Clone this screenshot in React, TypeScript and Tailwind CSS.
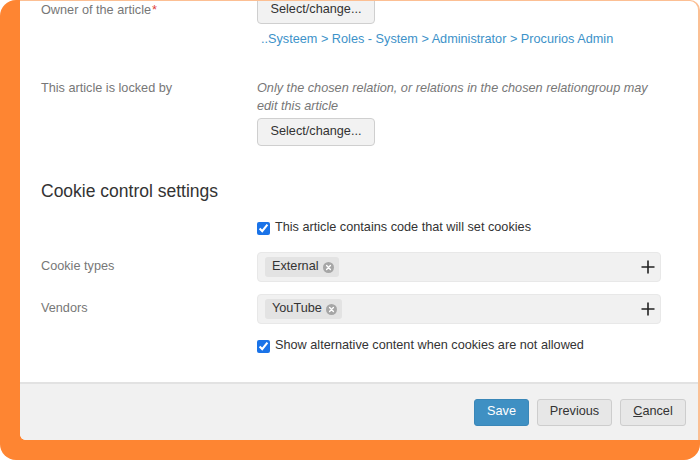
import React from "react";

const font = { fontFamily: '"Liberation Sans", Arial, Helvetica, sans-serif' };

const SelectButton = () => (
  <button
    type="button"
    className="h-[28px] w-[118px] rounded-[4px] border border-[#cfcfcf] bg-[#f2f2f2] text-[12.7px] text-[#333]"
  >
    Select/change...
  </button>
);

const RemoveIcon = () => (
  <svg width="11" height="11" viewBox="0 0 11 11" className="ml-[4px]">
    <circle cx="5.5" cy="5.5" r="5.5" fill="#a6a6a6" />
    <path d="M3.6 3.6 L7.4 7.4 M7.4 3.6 L3.6 7.4" stroke="#fff" strokeWidth="1.4" strokeLinecap="round" />
  </svg>
);

const PlusIcon = () => (
  <svg width="14" height="14" viewBox="0 0 14 14">
    <path d="M7 0.5 V13.5 M0.5 7 H13.5" stroke="#222" strokeWidth="1.6" />
  </svg>
);

const TagInput = ({ tag }: { tag: string }) => (
  <div className="flex h-[30px] w-[404px] items-center rounded-[4px] border border-[#e8e8e8] bg-[#f1f1f1] pl-[7px] pr-[5px]">
    <span className="flex h-[20px] items-center rounded-[3px] bg-[#e3e3e3] pl-[7px] pr-[5px] text-[12.7px] text-[#333]">
      {tag}
      <RemoveIcon />
    </span>
    <span className="ml-auto flex items-center">
      <PlusIcon />
    </span>
  </div>
);

const Checkbox = ({ label }: { label: string }) => (
  <label className="flex h-[18px] items-center text-[12.7px] text-[#333]">
    <input type="checkbox" defaultChecked className="m-0 h-[13px] w-[13px] accent-[#1a73e8]" />
    <span className="ml-[5px]">{label}</span>
  </label>
);

export default function App() {
  return (
    <div className="h-[460px] w-[700px] overflow-hidden bg-white" style={font}>
      <div className="flex h-full w-full rounded-[16px] bg-[#fe8532] pb-[20px] pl-[20px]">
        <div className="flex flex-1 flex-col overflow-hidden rounded-bl-[6px] rounded-tr-[10px] border-r-[2px] border-t border-[#fcbf93] bg-white">
          <div className="flex flex-1 flex-col pl-[21px] -mt-[5px]">
            <div className="flex">
              <div className="w-[216px] pt-[5px] text-[12.7px] leading-[18px] text-[#777]">
                Owner of the article<span className="ml-[1px] text-[#e0403a]">*</span>
              </div>
              <div className="flex flex-col">
                <SelectButton />
                <div className="mt-[6px] pl-[4px] text-[12.7px] leading-[18px] text-[#3d92c9]">
                  ..Systeem &gt; Roles - System &gt; Administrator &gt; Procurios Admin
                </div>
              </div>
            </div>

            <div className="mt-[31px] flex">
              <div className="w-[216px] text-[12.7px] leading-[18px] text-[#777]">This article is locked by</div>
              <div className="flex flex-col">
                <div className="w-[410px] text-[12.7px] italic leading-[18px] text-[#777]">
                  Only the chosen relation, or relations in the chosen relationgroup may
                  <br />
                  edit this article
                </div>
                <div className="mt-[3px]">
                  <SelectButton />
                </div>
              </div>
            </div>

            <h2 className="mt-[33px] text-[17.5px] leading-[24px] text-[#333]">Cookie control settings</h2>

            <div className="mt-[16px] pl-[216px]">
              <Checkbox label="This article contains code that will set cookies" />
            </div>

            <div className="mt-[15px] flex items-center">
              <div className="w-[216px] text-[12.7px] text-[#777]">Cookie types</div>
              <TagInput tag="External" />
            </div>

            <div className="mt-[12px] flex items-center">
              <div className="w-[216px] text-[12.7px] text-[#777]">Vendors</div>
              <TagInput tag="YouTube" />
            </div>

            <div className="mt-[13px] pl-[216px]">
              <Checkbox label="Show alternative content when cookies are not allowed" />
            </div>
          </div>

          <div className="flex h-[58px] items-center justify-end gap-[8px] border-t-[2px] border-[#e2e2e2] bg-[#f1f1f1] pr-[12px]">
            <button
              type="button"
              className="h-[27px] w-[55px] rounded-[3px] border border-[#3a87b8] bg-[#3f90c3] text-[12.7px] text-white"
            >
              Save
            </button>
            <button
              type="button"
              className="h-[27px] w-[75px] rounded-[3px] border border-[#cdcdcd] bg-[#e7e7e7] text-[12.7px] text-[#333]"
            >
              Previous
            </button>
            <button
              type="button"
              className="h-[27px] w-[66px] rounded-[3px] border border-[#cdcdcd] bg-[#e7e7e7] text-[12.7px] text-[#333]"
            >
              <span className="underline">C</span>ancel
            </button>
          </div>
        </div>
      </div>
    </div>
  );
}
